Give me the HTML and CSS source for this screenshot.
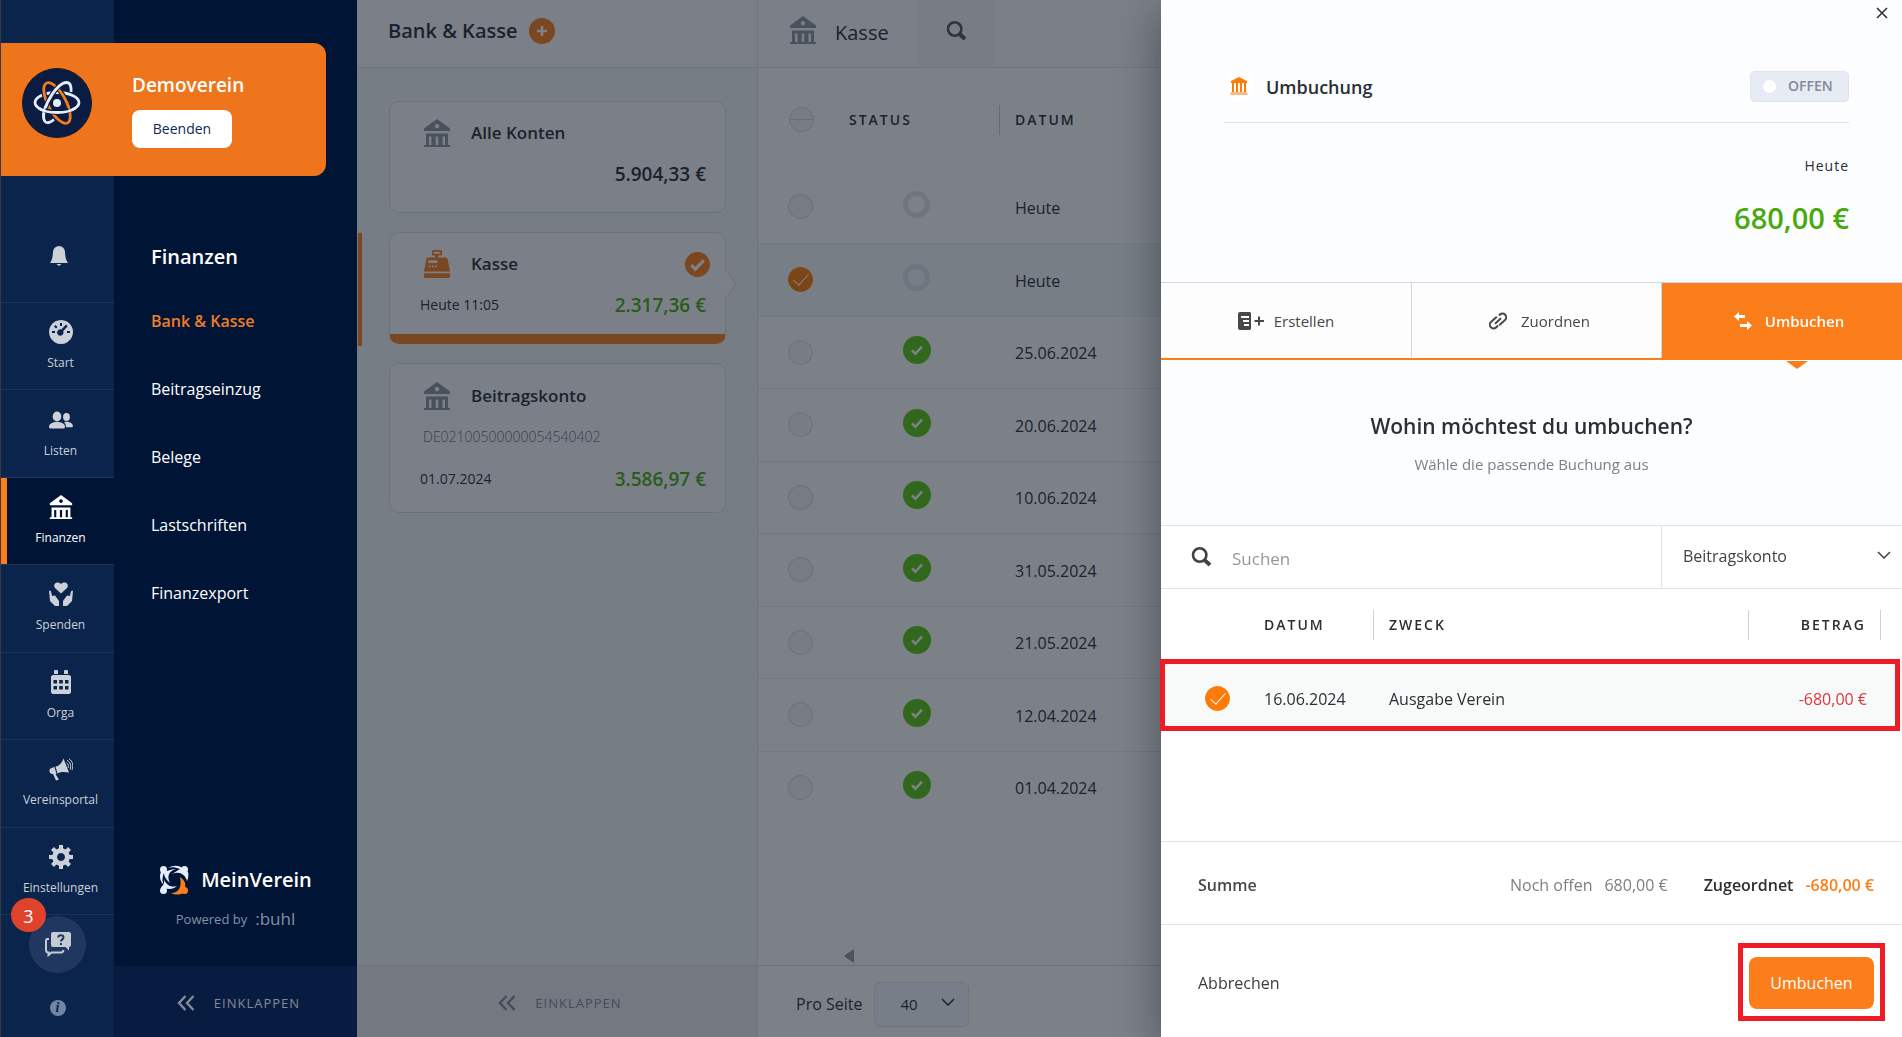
FILE: index.html
```html
<!DOCTYPE html>
<html lang="de">
<head>
<meta charset="utf-8">
<title>MeinVerein – Bank &amp; Kasse</title>
<meta name="viewport" content="width=device-width, initial-scale=1">
<link rel="stylesheet" href="styles.css">
</head>
<body>
<svg class="defs" aria-hidden="true">
  <symbol id="i-bank" viewBox="0 0 28 28">
    <path fill-rule="evenodd" d="M14 0 27 9.500V12H1V9.500ZM14 5a2.200 2.200 0 1 0 .01 0Z"/>
    <path fill-rule="evenodd" d="M3 14.500H25V26H27V28H1V26H3ZM6 17.500V26H8.500V17.500ZM12.700 17.500V26H15.300V17.500ZM19.500 17.500V26H22V17.500Z"/>
  </symbol>
  <symbol id="i-search" viewBox="0 0 20 20">
    <circle cx="8.200" cy="8" r="6.700" fill="none" stroke="currentColor" stroke-width="2.600"/>
    <path d="M13 13l5.500 5" fill="none" stroke="currentColor" stroke-width="3.800"/>
  </symbol>
  <symbol id="i-check" viewBox="0 0 24 24">
    <path d="M6 12.500l4 4L18 8" fill="none" stroke="currentColor" stroke-width="3"/>
  </symbol>
  <symbol id="i-down" viewBox="0 0 14 8">
    <path d="M1 1l6 6 6-6" fill="none" stroke="currentColor" stroke-width="1.500"/>
  </symbol>
  <symbol id="i-collapse" viewBox="0 0 18 16">
    <path d="M8.500 1L2 8l6.500 7M16.500 1L10 8l6.500 7" fill="none" stroke="currentColor" stroke-width="2.400"/>
  </symbol>
</svg>

<aside class="sidebar">
  <div class="club">
    <svg class="club-logo" viewBox="0 0 70 70" aria-hidden="true">
      <circle cx="35" cy="35" r="34.500" fill="#0a1c42" stroke="#141b2b"/>
      <g fill="none" stroke-width="2.800">
        <ellipse cx="35" cy="34.500" rx="22" ry="10" stroke="#e3edfc"/>
        <ellipse cx="35" cy="35" rx="22.500" ry="9" stroke="#0a1c42" stroke-width="5" transform="rotate(62 35 35)"/>
        <ellipse cx="35" cy="35" rx="22.500" ry="9" stroke="#f47b1d" transform="rotate(62 35 35)"/>
        <path d="M46.500 14.500C41 13 35 19 30 26.500 24 36 19 48 23 53.500 25 56 29 54 32 51.500" stroke="#0a1c42" stroke-width="5"/>
        <path d="M49 24C49.500 19 48.500 14.500 44.500 14.500 40 14.500 34 20 30 26.500 24 36 19 48 23 53.500 25 56 29 54 32 51.500" stroke="#e3edfc"/>
        <path d="M23 42.500C30 45 40 45 47 42.500" stroke="#0a1c42" stroke-width="5"/>
        <path d="M16.500 40C24 46 46 46 53.500 40" stroke="#e3edfc"/>
      </g>
      <circle cx="35" cy="35" r="4" fill="#e3edfc"/>
    </svg>
    <div class="club-info">
      <strong>Demoverein</strong>
      <button type="button">Beenden</button>
    </div>
  </div>

  <nav class="rail" aria-label="Hauptmenü">
    <a class="bell" href="#" aria-label="Benachrichtigungen">
      <svg width="18" height="20" viewBox="0 0 18 20"><path d="M9 0a6 6 0 0 1 6 6c.3 5 .9 8 3 11H0c2.100-3 2.700-6 3-11A6 6 0 0 1 9 0ZM6.500 18h5L9 20Z"/></svg>
    </a>
    <div class="rail-items">
      <a href="#"><svg viewBox="0 0 24 24"><path fill-rule="evenodd" d="M12 0a12 12 0 1 0 .01 0ZM11 3h2v3h-2ZM3 11h3v2H3ZM18 11h3v2h-3ZM5 6.500 6.500 5l2 2L7 8.500ZM17 4.500l1.700 1.700-4.500 5a3.200 3.200 0 1 1-1.900-1.700Z"/></svg>Start</a>
      <a href="#"><svg viewBox="0 0 24 24"><ellipse cx="17.500" cy="9" rx="3.400" ry="4"/><path d="M15 14c4-1 8.500.5 9 4 0 1-1 1.300-2 1.300h-5c0-2-.5-3.500-2-5.300Z"/><ellipse cx="8" cy="8.500" rx="4.300" ry="5"/><path d="M0 19c0-3.500 3.500-5 8-5s8 1.500 8 5c0 1-1 1.500-2 1.500H2c-1 0-2-.5-2-1.500Z"/></svg>Listen</a>
      <a href="#" class="active"><svg><use href="#i-bank"/></svg>Finanzen</a>
      <a href="#"><svg viewBox="0 0 24 24"><path d="M12 11.500 6 6C3.500 3 7 -2 12 2c5-4 8.500 1 6 4Z"/><path d="M0 9c1-.5 2 0 2.200 1l.8 4 3-.5 4 5.500v5H6L1 19ZM24 9c-1-.5-2 0-2.200 1l-.8 4-3-.5-4 5.500v5h4l5-5Z"/></svg>Spenden</a>
      <a href="#"><svg viewBox="0 0 24 24"><path d="M5 4V1.500a1.500 1.500 0 0 1 4 0V4ZM15 4V1.500a1.500 1.500 0 0 1 4 0V4Z"/><path fill-rule="evenodd" d="M3.500 5h17L22 6.500v16L20.500 24h-17L2 22.500v-16ZM4.500 10v3.500H8V10ZM10.200 10v3.500h3.600V10ZM16 10v3.500h3.500V10ZM4.500 16v3.500H8V16ZM10.200 16v3.500h3.600V16ZM16 16v3.500h3.500V16Z"/></svg>Orga</a>
      <a href="#"><svg viewBox="0 0 24 24"><path d="M6.500 9.500C11 9 13 5 14.500 1.500L20 15.500C16 15 12 14.500 8.500 16.500ZM5.500 10l2 7-1 .3 3.500 5.200-3 1-3-6.500C0 17.500-1 12 2.500 11Z"/><path d="M18 3.500c3.500 1.500 4.500 5 3 9M20 2c4 2 4.500 7 3 11M17.500 6c2 1 2.500 3 1.500 5" fill="none" stroke="currentColor"/></svg>Vereinsportal</a>
      <a href="#"><svg viewBox="0 0 24 24"><path fill-rule="evenodd" d="M10 0h4v3.300l2.600 1.100L19 2l3 3-2.400 2.400L20.700 10H24v4h-3.300l-1.100 2.600L22 19l-3 3-2.400-2.400-2.600 1.100V24h-4v-3.300l-2.600-1.100L5 22l-3-3 2.400-2.400L3.300 14H0v-4h3.300l1.100-2.600L2 5l3-3 2.400 2.400L10 3.300ZM12 8a4 4 0 1 0 .01 0Z"/></svg>Einstellungen</a>
    </div>
    <div class="rail-foot">
      <button type="button" class="help" aria-label="Hilfe">
        <svg width="28" height="26" viewBox="0 0 28 26"><path fill-rule="evenodd" d="M9 0H25a2 2 0 0 1 2 2V13a2 2 0 0 1-2 2v3.500L21.500 15H9a2 2 0 0 1-2-2V2A2 2 0 0 1 9 0Z"/><path d="M5 7H3.500Q2 7 2 9V18Q2 20.500 4.500 20.500V23l3-2.500H17Q19 20.500 19.500 18" fill="none" stroke="currentColor" stroke-width="2"/><path d="M14.300 5.500c0-3 5.200-3 5.200 0 0 2-2.500 1.800-2.500 4M17 11v2" fill="none" stroke="#20385f" stroke-width="2"/></svg>
        <span class="count">3</span>
      </button>
      <a class="info" href="#" aria-label="Info">i</a>
    </div>
  </nav>

  <nav class="subnav" aria-label="Finanzen">
    <h2>Finanzen</h2>
    <a href="#" class="current">Bank &amp; Kasse</a>
    <a href="#">Beitragseinzug</a>
    <a href="#">Belege</a>
    <a href="#">Lastschriften</a>
    <a href="#">Finanzexport</a>
    <div class="brand">
      <div class="brand-name">
        <svg width="30" height="30" viewBox="0 0 30 30" aria-hidden="true">
          <g fill="#e3edfc">
            <circle cx="4.500" cy="4.500" r="3.500"/><circle cx="25.500" cy="4.500" r="3.500"/><circle cx="4.500" cy="25.500" r="3.500"/>
            <path d="M9 3C14 0 20 0 23 3l6 4c1 3 0 7-1 9C26 9 20 6 13 9l8-5C16 2 12 2 9 3Z"/>
            <path d="M2 7c6 0 9-3 15-3C9 6 8 12 11 18 7 15 5 11 5 8 3 12 3 17 5 20 1 17 0 11 2 7Z"/>
            <path d="M2 22c2-1 4-4 3-8 2 6 7 9 13 7-3 3-8 4-13 2L7 28Z"/>
          </g>
          <g fill="#f97d18"><circle cx="25.500" cy="25.500" r="3.500"/><path d="M21 12c5 3 6 7 5 12l-2 4c-3 2-8 2-12 0 8 0 11-6 9-16Z"/></g>
        </svg>
        MeinVerein
      </div>
      <div class="powered">Powered by <b>:buhl</b></div>
    </div>
    <button type="button" class="collapse"><svg width="18" height="16"><use href="#i-collapse"/></svg>EINKLAPPEN</button>
  </nav>
</aside>

<main class="workspace">
  <section class="accounts">
    <header class="bar">
      <h1>Bank &amp; Kasse</h1>
      <button type="button" class="add" aria-label="Konto hinzufügen"><svg width="12" height="12" viewBox="0 0 12 12"><path d="M6 1v10M1 6h10" stroke="currentColor" stroke-width="2.600"/></svg></button>
    </header>
    <div class="cards">
      <article class="card">
        <div class="card-title"><svg class="acc"><use href="#i-bank"/></svg>Alle Konten</div>
        <div class="card-row"><span></span><b>5.904,33 €</b></div>
      </article>
      <article class="card selected">
        <div class="card-title"><svg class="acc" viewBox="0 0 28 30"><path fill-rule="evenodd" d="M10 0h8q1.500 0 1.500 1.500v3q0 1.500-1.500 1.500h-3v2h9q1 0 1.300 1.500L28 23H0L2.700 9.500Q3 8 4 8h8V6h-2Q8.500 6 8.500 4.500v-3Q8.500 0 10 0ZM10.500 2v2h7V2ZM5 11l-.6 3h10v-3ZM5 16.500v2h2v-2ZM8.500 16.500v2h2v-2ZM12 16.500v2h2v-2Z"/><path d="M0 25h28v3.500q0 1.500-1.500 1.500h-25Q0 30 0 28.500Z"/></svg>Kasse<svg class="tick"><use href="#i-check"/></svg></div>
        <div class="card-row"><span>Heute 11:05</span><b class="plus">2.317,36 €</b></div>
        <svg class="notch" width="12" height="32" viewBox="0 0 12 32"><path d="M0 1 11 16 0 31" fill="#fff" stroke="#dadde3"/></svg>
      </article>
      <article class="card">
        <div class="card-title"><svg class="acc"><use href="#i-bank"/></svg>Beitragskonto</div>
        <div class="iban">DE02100500000054540402</div>
        <div class="card-row"><span>01.07.2024</span><b class="plus">3.586,97 €</b></div>
      </article>
    </div>
    <button type="button" class="collapse"><svg width="18" height="16"><use href="#i-collapse"/></svg>EINKLAPPEN</button>
  </section>

  <section class="bookings">
    <header class="bar">
      <svg class="acc"><use href="#i-bank"/></svg>
      <h2>Kasse</h2>
      <button type="button" class="find" aria-label="Suchen"><svg width="21" height="20"><use href="#i-search"/></svg></button>
    </header>
    <table class="list">
      <thead><tr><th class="c-pick"><input type="checkbox" class="pick mixed" aria-label="Alle auswählen"></th><th class="c-status"><span>STATUS</span></th><th>DATUM</th></tr></thead>
      <tbody>
        <tr><td><input type="checkbox" class="pick" aria-label="Buchung 1"></td><td><i class="ring"></i></td><td>Heute</td></tr>
        <tr class="on"><td><input type="checkbox" class="pick" checked aria-label="Buchung 2"></td><td><i class="ring"></i></td><td>Heute</td></tr>
        <tr><td><input type="checkbox" class="pick" aria-label="Buchung 3"></td><td><svg class="done"><use href="#i-check"/></svg></td><td>25.06.2024</td></tr>
        <tr><td><input type="checkbox" class="pick" aria-label="Buchung 4"></td><td><svg class="done"><use href="#i-check"/></svg></td><td>20.06.2024</td></tr>
        <tr><td><input type="checkbox" class="pick" aria-label="Buchung 5"></td><td><svg class="done"><use href="#i-check"/></svg></td><td>10.06.2024</td></tr>
        <tr><td><input type="checkbox" class="pick" aria-label="Buchung 6"></td><td><svg class="done"><use href="#i-check"/></svg></td><td>31.05.2024</td></tr>
        <tr><td><input type="checkbox" class="pick" aria-label="Buchung 7"></td><td><svg class="done"><use href="#i-check"/></svg></td><td>21.05.2024</td></tr>
        <tr><td><input type="checkbox" class="pick" aria-label="Buchung 8"></td><td><svg class="done"><use href="#i-check"/></svg></td><td>12.04.2024</td></tr>
        <tr><td><input type="checkbox" class="pick" aria-label="Buchung 9"></td><td><svg class="done"><use href="#i-check"/></svg></td><td>01.04.2024</td></tr>
      </tbody>
    </table>
    <div class="scroll"><svg width="10" height="14" viewBox="0 0 10 14"><path d="M10 0v14L1 8Q0 7 1 6Z"/></svg></div>
    <footer class="pager">
      <label for="per-page">Pro Seite</label>
      <span class="choice"><select id="per-page"><option>40</option></select><svg width="14" height="8"><use href="#i-down"/></svg></span>
    </footer>
  </section>
  <div class="dim"></div>
</main>

<aside class="drawer" aria-label="Umbuchung">
  <button type="button" class="close" aria-label="Schließen"><svg width="12" height="12" viewBox="0 0 12 12"><path d="M1 1l10 10M11 1L1 11" stroke="currentColor" stroke-width="1.500"/></svg></button>
  <header class="summary">
    <div class="summary-top">
      <span class="type"><svg width="18" height="18" viewBox="0 0 18 18"><path d="M9 0l8 4v2H1V4ZM2 6h2v9H2ZM6 6h2v9H6ZM10 6h2v9h-2ZM14 6h2v9h-2Z" fill="#ff7b08"/><path d="M1 15h16l1 3H0Z" fill="#fcb983"/></svg></span>
      <h2>Umbuchung</h2>
      <span class="badge">OFFEN</span>
    </div>
    <p class="day">Heute</p>
    <p class="amount">680,00 €</p>
  </header>
  <div class="tabs">
    <button type="button"><svg width="26" height="18" viewBox="0 0 26 18"><path fill-rule="evenodd" d="M2 0h10l1 1v16l-1 1H2q-2 0-2-2V2q0-2 2-2ZM3 4v2h8V4ZM5 8v2h6V8ZM6 12v2h5v-2Z"/><path d="M21 4.500v9M16.500 9h9.500" stroke="currentColor" stroke-width="2"/></svg>Erstellen</button>
    <button type="button"><svg width="18" height="18" viewBox="0 0 18 18"><g fill="none" stroke="currentColor" stroke-width="2" transform="rotate(-42 9 9)"><path d="M11 5H3.500a3.500 3.500 0 0 0-.5 7.500h3M7 13h7.500a3.500 3.500 0 0 0 .5-7.500h-1.500M5 9h8"/></g></svg>Zuordnen</button>
    <button type="button" class="active"><svg width="18" height="18" viewBox="0 0 18 18"><path d="M0 4.500 5 0v3h6v3H5v3ZM18 13.500 13 9v3H6v3h7v3Z"/></svg>Umbuchen</button>
  </div>
  <div class="question">
    <h3>Wohin möchtest du umbuchen?</h3>
    <p>Wähle die passende Buchung aus</p>
  </div>
  <div class="filter">
    <svg width="21" height="20"><use href="#i-search"/></svg>
    <input type="search" placeholder="Suchen" aria-label="Suchen">
    <span class="choice"><select aria-label="Konto"><option>Beitragskonto</option></select><svg width="14" height="8"><use href="#i-down"/></svg></span>
  </div>
  <div class="matches">
    <table>
      <thead><tr><th class="m-pick"></th><th class="m-date"><span>DATUM</span></th><th class="m-text"><span>ZWECK</span></th><th class="m-sum"><span>BETRAG</span></th><th class="m-end"></th></tr></thead>
      <tbody><tr><td><input type="checkbox" class="pick" checked aria-label="Ausgabe Verein"></td><td>16.06.2024</td><td class="m-text">Ausgabe Verein</td><td class="m-sum minus">-680,00 €</td><td></td></tr></tbody>
    </table>
    <div class="marker marker-row"></div>
  </div>
  <div class="total">
    <b class="total-name">Summe</b>
    <span>Noch offen</span><span>680,00 €</span>
    <b class="assigned">Zugeordnet</b><b class="rest">-680,00 €</b>
  </div>
  <footer class="actions">
    <button type="button" class="cancel">Abbrechen</button>
    <div class="submit-wrap"><button type="button" class="submit">Umbuchen</button><div class="marker marker-button"></div></div>
  </footer>
</aside>
</body>
</html>
```
FILE: styles.css
```css
:root {
  --orange: #fc7e1a;
  --navy: #001435;
  --rail: #0b244c;
  --line: #dfe3ee;
  --green: #48aa0e;
}
* { box-sizing: border-box; }
body {
  margin: 0;
  height: 100vh;
  display: flex;
  overflow: hidden;
  border-left: 1px solid #3a3a3c;
  font: 16px/24px "Open Sans", "Noto Sans", sans-serif;
  color: #2b2e34;
}
h1, h2, h3, p { margin: 0; font-weight: 400; }
b, strong { font-weight: 600; }
a { color: inherit; text-decoration: none; }
button, input, select { font: inherit; color: inherit; border: 0; background: none; padding: 0; margin: 0; }
svg { fill: currentColor; display: block; flex: none; }
.defs { position: absolute; width: 0; height: 0; }

/* Sidebar */
.sidebar { position: relative; display: flex; flex: none; color: #fff; }
.club {
  position: absolute;
  top: 43px;
  left: 0;
  width: 325px;
  height: 133px;
  display: flex;
  align-items: center;
  gap: 40px;
  padding-left: 21px;
  background: #ee751c;
  border-radius: 0 12px 12px 0;
}
.club-logo { width: 70px; height: 70px; margin-bottom: 13px; }
.club-info { display: flex; flex-direction: column; gap: 13px; align-items: flex-start; padding-top: 2px; }
.club strong { font-size: 19px; }
.club button { width: 100px; height: 38px; background: #fff; color: #0f2a57; border-radius: 8px; font-size: 14px; }

.rail { width: 113px; display: flex; flex-direction: column; background: var(--rail); color: #ccd1d9; }
.bell { height: 303px; padding: 246px 0 0 49px; border-bottom: 1px solid #1c3458; }
.rail-items { flex: 1; display: grid; grid-auto-rows: 1fr; font-size: 12px; line-height: 18px; }
.rail-items a {
  display: flex;
  flex-direction: column;
  align-items: center;
  justify-content: center;
  gap: 10px;
  padding-left: 6px;
  border-bottom: 1px solid #1c3458;
}
.rail-items svg { width: 24px; height: 24px; }
.rail-items .active { background: var(--navy); color: #fff; box-shadow: inset 6px 0 var(--orange); }
.rail-foot { height: 122px; padding-top: 1px; display: flex; flex-direction: column; align-items: center; gap: 27px; }
.help { position: relative; width: 57px; height: 57px; border-radius: 50%; background: #20385f; color: #c5cbd5; display: grid; place-items: center; }
.count { position: absolute; left: -18px; top: -18px; width: 35px; height: 34px; border-radius: 50%; background: #e0432c; color: #fff; font-size: 18px; line-height: 36px; }
.info { width: 16px; height: 16px; border-radius: 50%; background: #7285a5; color: var(--rail); font: italic bold 14px/16px "Liberation Serif", serif; text-align: center; }

.subnav { width: 243px; display: flex; flex-direction: column; background: var(--navy); }
.subnav h2 { padding: 243px 0 0 37px; font-size: 20px; line-height: 28px; font-weight: 600; margin-bottom: 16px; }
.subnav > a { height: 68px; padding-left: 37px; line-height: 68px; }
.subnav .current { color: #ee7d26; font-weight: 600; }
.brand { margin-top: auto; padding-bottom: 35px; display: flex; flex-direction: column; align-items: center; gap: 12px; }
.brand-name { display: flex; align-items: center; gap: 12px; font-size: 20px; line-height: 30px; font-weight: 600; }
.powered { display: flex; align-items: center; gap: 8px; font-size: 13px; line-height: 24px; color: #8592a8; }
.powered b { font-size: 17px; font-weight: 400; }
.collapse { height: 71px; width: 100%; display: flex; align-items: center; justify-content: center; gap: 19px; padding: 3px 0 0 6px; font-size: 13px; letter-spacing: 1px; color: #858a94; background: #081c42; }

/* Accounts and bookings */
.workspace { position: relative; flex: 1; display: flex; min-width: 0; background: #fff; }
.dim { position: absolute; inset: 0; background: rgba(17, 25, 38, .55); }
.bar { height: 68px; display: flex; align-items: center; background: #fdfdff; border-bottom: 1px solid #e4e6ee; }
.bar h1, .bar h2 { font-size: 20px; line-height: 28px; }
.bar h1 { font-weight: 600; }
.acc { width: 28px; height: 28px; color: #8f949f; }
.accounts { width: 401px; flex: none; display: flex; flex-direction: column; background: #f4f5f9; border-right: 1px solid #dfe1e9; }
.accounts .bar { padding: 0 0 6px 31px; gap: 12px; }
.add { width: 26px; height: 26px; border-radius: 50%; background: var(--orange); color: #fff; display: grid; place-items: center; }
.cards { flex: 1; padding: 33px 31px 33px 32px; display: flex; flex-direction: column; gap: 19px; }
.card { position: relative; background: #fdfdff; border: 1px solid #dadde3; border-radius: 10px; padding: 17px 19px 17px 30px; min-height: 112px; }
.card-title { display: flex; align-items: center; gap: 20px; height: 28px; font-size: 17px; font-weight: 600; padding-left: 3px; }
.card-row { display: flex; justify-content: space-between; align-items: center; margin-top: 13px; height: 28px; font-size: 14px; }
.card-row b { font-size: 19px; font-weight: 600; }
.plus { color: var(--green); }
.card:last-child { height: 150px; padding-top: 18px; }
.iban { margin: 17px 0 0 3px; font-size: 14px; line-height: 20px; font-weight: 300; color: #6d727c; }
.iban + .card-row { margin-top: 10px; height: 44px; }
.selected .acc { color: var(--orange); }
.selected { border-bottom: 10px solid var(--orange); padding-bottom: 0; }
.selected::before { content: ""; position: absolute; left: -32px; top: 0; width: 4px; height: 113px; background: var(--orange); }
.tick { width: 25px; height: 25px; border-radius: 50%; background: var(--orange); color: #fff; margin: 0 -4px 0 auto; }
.notch { position: absolute; left: 100%; top: 35px; }
.accounts .collapse { background: #ebecf0; border-top: 1px solid #e0e2e8; height: 72px; }

.bookings { flex: 1; display: flex; flex-direction: column; min-width: 0; }
.bookings .bar { padding-left: 31px; }
.bookings .bar h2 { margin: 0 30px 0 18px; padding-bottom: 2px; }
.bookings .bar .acc { margin-bottom: 7px; }
.find { width: 75px; height: 67px; background: #f5f6f9; display: grid; place-items: center; padding-bottom: 5px; color: #50545c; }
.list { width: 100%; border-collapse: collapse; table-layout: fixed; }
.list th { height: 103px; text-align: left; }
th { font-size: 14px; font-weight: 600; letter-spacing: 2px; padding: 0; }
.list .c-pick { width: 91px; padding-left: 31px; }
.list .c-status { width: 166px; }
th span { display: block; height: 30px; line-height: 30px; border-right: 1px solid #cdd0d6; }
.list .c-status span { width: 151px; }
.list td { height: 72px; padding: 0; border-bottom: 1px solid #e8eaef; }
.list tr:nth-child(even) td { height: 73px; }
.list td:last-child { padding-top: 2px; }
.list tr:last-child td { border: 0; }
.list td:first-child { padding-left: 30px; }
.list .on td { background: #f4f8f8; }
.pick { appearance: none; display: block; width: 25px; height: 25px; border: 1px solid #d6d8dd; border-radius: 50%; background: #f5f6f8; position: relative; }
.pick:checked { background: #ff7b08; border-color: #ff7b08; }
.pick:checked::after { content: ""; position: absolute; left: 8px; top: 2px; width: 7px; height: 14px; border: solid #fff; border-width: 0 1px 1px 0; transform: rotate(42deg); }
.mixed::after { content: ""; position: absolute; left: 0; right: 0; top: 11px; height: 1px; background: #d6d8dd; }
.ring { display: block; width: 27px; height: 27px; margin: 0 0 4px 54px; border: 5px solid #e2e4e8; border-radius: 50%; }
.done { width: 28px; height: 28px; padding: 4px; margin: 0 0 4px 54px; border-radius: 50%; background: #5cc814; color: #fff; }
.scroll { margin-top: auto; padding: 0 0 2px 86px; color: #979ba3; }
.pager { height: 72px; flex: none; border-top: 1px solid #d8dae0; display: flex; align-items: center; gap: 12px; padding: 5px 0 0 38px; }
.choice { display: grid; align-items: center; }
.choice > * { grid-area: 1 / 1; }
.choice select { appearance: none; width: 100%; height: 100%; }
.choice svg { justify-self: end; pointer-events: none; }
.pager .choice { width: 95px; height: 45px; border: 1px solid #dde1ea; border-radius: 6px; background: #f6f9fc; }
.pager select { padding-left: 25px; font-size: 15px; }
.pager svg { margin: 0 13px 4px 0; }

/* Booking drawer */
.drawer {
  position: fixed;
  inset: 0 0 0 auto;
  width: 741px;
  max-width: 100%;
  display: flex;
  flex-direction: column;
  background: #fff;
  box-shadow: 0 12px 40px rgba(20, 20, 30, .45);
}
.close { position: absolute; top: 7px; right: 14px; }
.summary { height: 283px; padding: 50px 53px 0 63px; background: #fcfdff; border-bottom: 1px solid #d4d4e6; text-align: right; }
.summary-top { display: flex; align-items: center; height: 73px; border-bottom: 1px solid #e0e0f0; }
.type { width: 30px; height: 30px; border-radius: 50%; background: #fff; display: grid; place-items: center; }
.summary h2 { font-size: 18px; font-weight: 600; margin-left: 12px; padding-top: 2px; }
.badge { margin-left: auto; width: 99px; height: 31px; display: flex; align-items: center; gap: 12px; padding-left: 12px; background: #e7ebf4; border: 1px solid #dfe3f0; border-radius: 5px; font-size: 14px; font-weight: 600; color: #83889c; }
.badge::before { content: ""; width: 13px; height: 13px; border-radius: 50%; background: #fff; }
.day { margin-top: 31px; font-size: 14px; letter-spacing: 1px; }
.amount { margin-top: 20px; font-size: 29px; line-height: 40px; font-weight: 600; color: var(--green); }
.tabs { display: grid; grid-template-columns: 251px 250px 1fr; height: 77px; border-bottom: 2px solid var(--orange); background: #fdfdfd; font-size: 15px; color: #46484c; }
.tabs button { display: flex; align-items: center; justify-content: center; gap: 10px; border-right: 1px solid #d4d4e6; }
.tabs button:nth-child(2) { gap: 14px; padding-left: 6px; }
.tabs .active { position: relative; background: var(--orange); color: #fff; border: 0; gap: 13px; font-weight: 600; padding-left: 14px; }
.tabs .active::after { content: ""; position: absolute; left: 124px; top: 78px; border: solid transparent; border-width: 8px 11px 0; border-top-color: var(--orange); }
.question { height: 165px; padding-top: 50px; background: #fcfdff; text-align: center; }
.question h3 { font-size: 21px; line-height: 32px; font-weight: 600; }
.question p { margin-top: 10px; font-size: 15px; color: #7c7f84; }
.filter { height: 64px; display: flex; align-items: center; border: solid var(--line); border-width: 1px 0; padding-left: 30px; color: #404246; }
.filter input { flex: 1; min-width: 0; margin-left: 20px; padding-top: 2px; height: 100%; font-size: 17px; }
.filter input::placeholder { color: #979797; opacity: 1; }
.filter .choice { width: 241px; height: 100%; border-left: 1px solid var(--line); }
.filter select { padding: 0 0 2px 21px; }
.filter .choice svg { margin: 0 11px 5px 0; }
.matches { position: relative; flex: 1; }
.matches table { width: 100%; border-collapse: collapse; table-layout: fixed; }
.matches th { height: 71px; text-align: left; }
.matches td { height: 71px; padding: 6px 0 0; background: #f8faf9; }
.matches td:first-child { padding-left: 44px; }
.m-pick { width: 103px; }
.m-date { width: 110px; }
.matches .m-text { padding-left: 15px; }
.m-sum { width: 132px; }
.m-end { width: 21px; }
.matches .m-sum span, .matches td.m-sum { text-align: right; padding-right: 14px; }
.minus { color: #e2363b; }
.marker { position: absolute; border: 5px solid #ee1c25; pointer-events: none; }
.marker-row { left: -1px; right: 2px; top: 70px; height: 72px; }
.total { height: 83px; display: flex; align-items: center; padding: 3px 28px 0 37px; border-top: 1px solid var(--line); color: #7c7f84; gap: 12px; }
.total-name { margin-right: auto; color: #46484c; }
.assigned { margin-left: 24px; color: #2c2e32; }
.rest { color: var(--orange); }
.actions { height: 113px; display: flex; align-items: center; justify-content: space-between; padding: 4px 28px 0 37px; border-top: 1px solid var(--line); color: #3a3c40; }
.submit-wrap { position: relative; }
.submit { width: 125px; height: 52px; border-radius: 8px; background: var(--orange); color: #fff; display: block; }
.marker-button { inset: -14px -11px -12px; }
```
